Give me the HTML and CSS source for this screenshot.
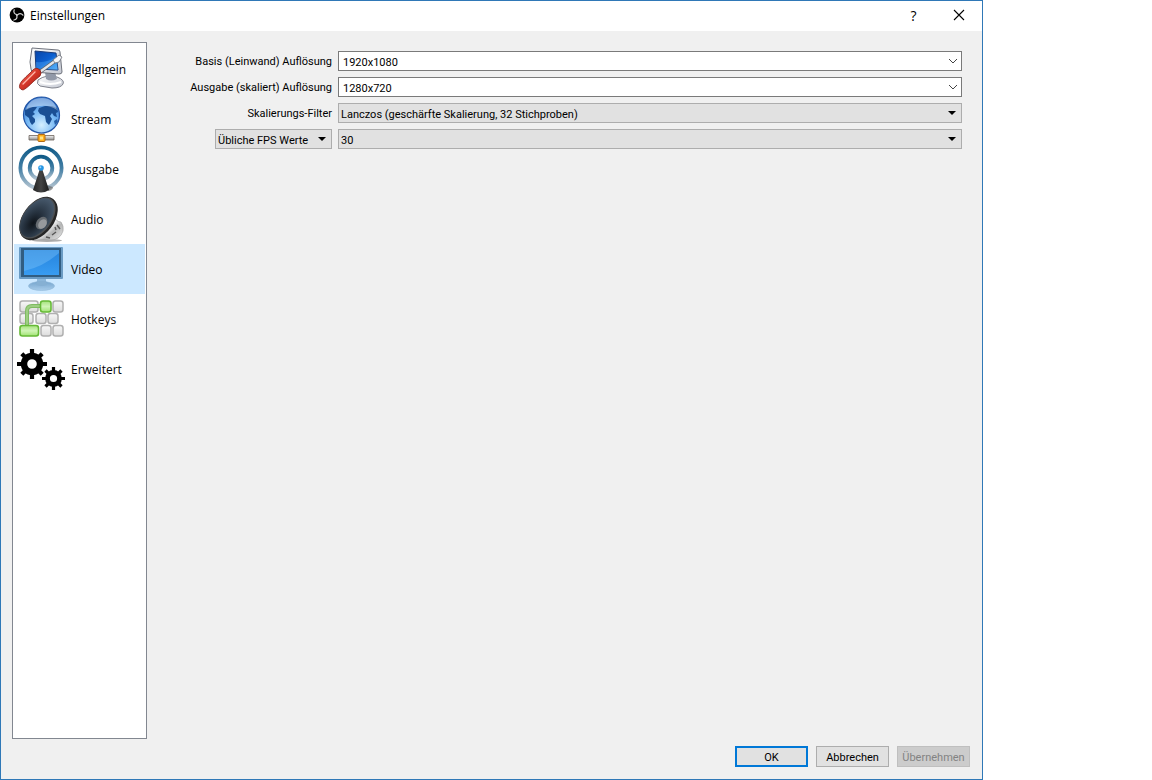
FILE: index.html
```
<!DOCTYPE html>
<html lang="de">
<head>
    <meta charset="UTF-8">
    <meta name="viewport" content="width=device-width, initial-scale=1.0">
    <title>Einstellungen</title>
    <link rel="stylesheet" href="styles.css">
</head>
<body>

    <div class="window">
        <header class="titlebar">
            <svg class="logo" viewBox="0 0 16 16" aria-hidden="true">
                <circle cx="8" cy="8" r="7.4" fill="#000"/>
                <g fill="none" stroke="#d8d8d8" stroke-width="1.2" stroke-linecap="round">
                    <path d="M5.2 2.8C4.2 5.2 5.5 7.3 8 7.6"/>
                    <path d="M5.2 2.8C4.2 5.2 5.5 7.3 8 7.6" transform="rotate(120 8 8)"/>
                    <path d="M5.2 2.8C4.2 5.2 5.5 7.3 8 7.6" transform="rotate(240 8 8)"/>
                </g>
            </svg>
            <h1>Einstellungen</h1>
            <button type="button" class="title-button" aria-label="Hilfe">?</button>
            <button type="button" class="title-button" aria-label="Schließen">
                <svg class="close-icon" viewBox="0 0 12 12"><path d="M1 1l10 10M11 1L1 11" stroke="#000" stroke-width="1.1"/></svg>
            </button>
        </header>

        <form class="settings">
            <div class="content">
                <nav class="sidebar">
                    <a href="#allgemein" class="nav-item">
                        <svg class="icon" viewBox="0 0 48 48">
                            <defs>
                                <linearGradient id="screen" x1="0" y1="0" x2="1" y2="1"><stop offset="0" stop-color="#0744a8"/><stop offset=".5" stop-color="#0b5fd0"/><stop offset="1" stop-color="#5ab4f8"/></linearGradient>
                                <linearGradient id="casing" x1="0" y1="0" x2="1" y2="1"><stop offset="0" stop-color="#fff"/><stop offset="1" stop-color="#c4c8d2"/></linearGradient>
                                <linearGradient id="handle" x1="0" y1="0" x2="1" y2="1"><stop offset="0" stop-color="#f58a7c"/><stop offset=".45" stop-color="#d93a2c"/><stop offset="1" stop-color="#9c160e"/></linearGradient>
                            </defs>
                            <path d="M21 35Q29 29 40 32Q48 35 46 39Q44 43 35 43L23 41Q19 39 21 35Z" fill="url(#casing)" stroke="#80838d"/>
                            <path d="M23 37Q33 41 44 37" fill="none" stroke="#fff" stroke-width="2"/>
                            <path d="M28 27h10l2 7q-6 3-11 0z" fill="#9299a8"/>
                            <path d="M15 3L41 5Q43 5 43 7L45 27Q45 29 42 29L17 27Q14 27 14 24L13 17Z" fill="url(#casing)" stroke="#6f737d"/>
                            <path d="M18 6L39 8L41 25L19 24Z" fill="url(#screen)" stroke="#183b7a"/>
                            <path d="M19 17Q30 18 40 12L41 25L19 24Z" fill="#58b4ff" opacity=".35"/>
                            <path d="M20 29L38 16" stroke="#5c6068" stroke-width="4"/>
                            <path d="M20 29L38 16" stroke="#e3e6ea" stroke-width="2.4"/>
                            <path d="M36 15L42 10L45 12L42 17L38 18Z" fill="#f5f6f8" stroke="#70747c" stroke-width=".8"/>
                            <path d="M3 39Q4 36 13 28L17 24Q20 22 23 25Q25 28 23 31L17 36Q9 44 6 45Q1 44 3 39Z" fill="url(#handle)" stroke="#8c1f17" stroke-width=".8"/>
                            <path d="M6 39Q11 34 18 27" fill="none" stroke="#ffb4a8" stroke-width="1.4" stroke-linecap="round"/>
                        </svg>
                        Allgemein
                    </a>
                    <a href="#stream" class="nav-item">
                        <svg class="icon" viewBox="0 0 48 48">
                            <defs>
                                <radialGradient id="globe" cx=".5" cy=".78" r=".8"><stop offset="0" stop-color="#d5efff"/><stop offset=".5" stop-color="#75b7f4"/><stop offset="1" stop-color="#2467c4"/></radialGradient>
                                <linearGradient id="pipe" x1="0" y1="0" x2="0" y2="1"><stop offset="0" stop-color="#f6f6f6"/><stop offset="1" stop-color="#8d8d8d"/></linearGradient>
                            </defs>
                            <path d="M22 36h5v6h-5z" fill="#aeb4bd" stroke="#6f747c" stroke-width=".6"/>
                            <path d="M12 40.5h25v4.5h-25z" fill="url(#pipe)" stroke="#6c625a" stroke-width=".8"/>
                            <rect x="21" y="39.5" width="7" height="7" rx="1" fill="#ffb01c" stroke="#b06a16"/>
                            <rect x="23" y="41.5" width="3" height="3" fill="#ffe48a"/>
                            <circle cx="24.5" cy="20" r="18" fill="url(#globe)" stroke="#2355a5" stroke-width="1.2"/>
                            <path d="M8 15Q11 12 16 12L20 12L18 15L16 17L18 19L15 21L18 24L18 27L15 30L13 27L12 23L8 20Z" fill="#1a4f94"/>
                            <path d="M22 13L28 11L35 11L40 13L41 17L39 18L40 22L37 21L35 18L33 21L35 24L32 30L29 27L28 21L23 19L21 16Z" fill="#1a4f94"/>
                            <path d="M37 26l3-2 1 3-3 3z" fill="#2860a8"/>
                            <path d="M9 15Q12 3 25 3Q37 3 40 15Q32 10 24 11Q15 11 9 15Z" fill="#fff" opacity=".4"/>
                        </svg>
                        Stream
                    </a>
                    <a href="#ausgabe" class="nav-item">
                        <svg class="icon" viewBox="0 0 48 48">
                            <defs>
                                <linearGradient id="wave" x1="0" y1="0" x2="0" y2="1"><stop offset="0" stop-color="#115b88"/><stop offset=".5" stop-color="#437fa5"/><stop offset="1" stop-color="#b6c5d1"/></linearGradient>
                                <linearGradient id="mast" x1="0" y1="0" x2="1" y2="0"><stop offset="0" stop-color="#222"/><stop offset=".5" stop-color="#444"/><stop offset="1" stop-color="#1c1c1c"/></linearGradient>
                            </defs>
                            <circle cx="24" cy="23" r="20.6" fill="none" stroke="url(#wave)" stroke-width="3.8"/>
                            <circle cx="24" cy="23" r="11.3" fill="none" stroke="url(#wave)" stroke-width="3.8"/>
                            <path d="M29 40L36 42Q36 45 31 46Z" fill="#555" opacity=".6"/>
                            <path d="M22.5 25h3L32 45Q24 50 16 45Z" fill="url(#mast)"/>
                            <circle cx="24" cy="23" r="2.8" fill="#2696e4"/>
                            <circle cx="23.3" cy="22.2" r="1" fill="#9ed8ff"/>
                        </svg>
                        Ausgabe
                    </a>
                    <a href="#audio" class="nav-item">
                        <svg class="icon" viewBox="0 0 48 48">
                            <defs>
                                <linearGradient id="metal" x1="0" y1="0" x2="1" y2="1"><stop offset="0" stop-color="#777"/><stop offset=".45" stop-color="#fff"/><stop offset=".65" stop-color="#b4b5b5"/><stop offset="1" stop-color="#eee"/></linearGradient>
                                <radialGradient id="cone" cx=".5" cy=".65" r=".7"><stop offset="0" stop-color="#0f141a"/><stop offset=".4" stop-color="#26323f"/><stop offset="1" stop-color="#4c5f73"/></radialGradient>
                            </defs>
                            <ellipse cx="30" cy="45.5" rx="15" ry="1.5" fill="#777" opacity=".6"/>
                            <path d="M36 20Q39 27 44 27Q47 31 46 36Q43 45 34 45L18 44Z" fill="url(#metal)" stroke="#999" stroke-width=".6"/>
                            <path d="M40 30l3 4M35 40l4-3M29 42l4 1M38 32l1 3" fill="none" stroke="#555" stroke-width="1.4"/>
                            <ellipse cx="21.5" cy="23.5" rx="15.5" ry="24.5" transform="rotate(37 21.5 23.5)" fill="#262626"/>
                            <ellipse cx="20.5" cy="23" rx="14" ry="23.5" transform="rotate(37 20.5 23)" fill="#4c4f51"/>
                            <ellipse cx="20" cy="22.8" rx="13" ry="22.3" transform="rotate(37 20 22.8)" fill="url(#cone)"/>
                            <ellipse cx="24.5" cy="28" rx="5" ry="7" transform="rotate(37 24.5 28)" fill="#666b70"/>
                            <ellipse cx="25.5" cy="29" rx="3.8" ry="5.2" transform="rotate(37 25.5 29)" fill="#96999c"/>
                        </svg>
                        Audio
                    </a>
                    <a href="#video" class="nav-item active">
                        <svg class="icon" viewBox="0 0 48 48">
                            <defs>
                                <linearGradient id="display" x1="0" y1="0" x2="0" y2="1"><stop offset="0" stop-color="#2583dc"/><stop offset="1" stop-color="#389cf2"/></linearGradient>
                                <linearGradient id="foot" x1="0" y1="0" x2="0" y2="1"><stop offset="0" stop-color="#76a5cd"/><stop offset="1" stop-color="#a8ccea"/></linearGradient>
                            </defs>
                            <path d="M20 33h9v6h-9z" fill="#8db7da"/>
                            <ellipse cx="24.5" cy="41" rx="13" ry="4.5" fill="url(#foot)" stroke="#8fb7d8" stroke-width=".6"/>
                            <path d="M20 36h9l1 4q-5 2-11 0z" fill="#86b0d3"/>
                            <rect x="2" y="2" width="44" height="32" rx="1" fill="#6a9bc4"/>
                            <rect x="4" y="3" width="40" height="29" fill="#315d82"/>
                            <rect x="7" y="5" width="35" height="25" fill="url(#display)"/>
                            <path d="M7 5h35v3Q26 22 7 26Z" fill="#80c5fa" opacity=".4"/>
                        </svg>
                        Video
                    </a>
                    <a href="#hotkeys" class="nav-item">
                        <svg class="icon" viewBox="0 0 48 48">
                            <defs>
                                <linearGradient id="key" x1="0" y1="0" x2="0" y2="1"><stop offset="0" stop-color="#f8f8f8"/><stop offset="1" stop-color="#dcdcdc"/></linearGradient>
                                <linearGradient id="green-key" x1="0" y1="0" x2="0" y2="1"><stop offset="0" stop-color="#a5e27c"/><stop offset=".5" stop-color="#d0f4b6"/><stop offset="1" stop-color="#a0e372"/></linearGradient>
                            </defs>
                            <g fill="url(#key)" stroke="#b0b0b0" stroke-width="1.5">
                                <rect x="3" y="6" width="18" height="11" rx="2.5"/>
                                <rect x="36" y="6" width="10" height="11" rx="2.5"/>
                                <rect x="3" y="18.5" width="13" height="10" rx="2.5"/>
                                <rect x="19" y="18.5" width="10" height="10" rx="2.5"/>
                                <rect x="31" y="18.5" width="10" height="10" rx="2.5"/>
                                <rect x="24" y="30.5" width="10" height="10.5" rx="2.5"/>
                                <rect x="36" y="30.5" width="10" height="10.5" rx="2.5"/>
                            </g>
                            <path d="M24 11H15Q10 11 10 16V31" fill="none" stroke="#7fbb62" stroke-width="4"/>
                            <path d="M24 11H15Q10 11 10 16V31" fill="none" stroke="#9dce82" stroke-width="2"/>
                            <g fill="url(#green-key)" stroke="#65b936" stroke-width="1.6">
                                <rect x="23.5" y="6" width="10.5" height="11" rx="2.5"/>
                                <rect x="3" y="30.5" width="18.5" height="10.5" rx="2.5"/>
                            </g>
                        </svg>
                        Hotkeys
                    </a>
                    <a href="#erweitert" class="nav-item">
                        <svg class="icon" viewBox="0 0 48 48">
                            <g fill="none" stroke="#000">
                                <circle cx="15" cy="19" r="8" stroke-width="6.4"/>
                                <path d="M15 4v6M15 28v6M0 19h6M24 19h6M4.8 8.8l4 4M21.2 25.2l4 4M4.8 29.2l4-4M21.2 12.8l4-4" stroke-width="4.2"/>
                                <circle cx="36.5" cy="33.5" r="6" stroke-width="4.8"/>
                                <path d="M36.5 22v4M36.5 41v4M25 33.5h4M44 33.5h4M28.5 25.5l3 3M41.5 38.5l3 3M28.5 41.5l3-3M41.5 28.5l3-3" stroke-width="3.2"/>
                            </g>
                        </svg>
                        Erweitert
                    </a>
                </nav>

                <main class="video-settings">
                    <label for="base">Basis (Leinwand) Auflösung</label>
                    <select id="base" name="base" class="editable">
                        <option>1920x1080</option>
                        <option>1280x720</option>
                    </select>

                    <label for="output">Ausgabe (skaliert) Auflösung</label>
                    <select id="output" name="output" class="editable">
                        <option>1280x720</option>
                        <option>1920x1080</option>
                    </select>

                    <label for="filter">Skalierungs-Filter</label>
                    <select id="filter" name="filter">
                        <option>Lanczos (geschärfte Skalierung, 32 Stichproben)</option>
                    </select>

                    <select id="fps-type" name="fps-type" class="fps-type" aria-label="FPS Typ">
                        <option>Übliche FPS Werte</option>
                    </select>
                    <select id="fps" name="fps" aria-label="FPS">
                        <option>30</option>
                        <option>60</option>
                    </select>
                </main>
            </div>

            <footer class="buttons">
                <button type="submit" class="button default">OK</button>
                <button type="button" class="button">Abbrechen</button>
                <button type="button" class="button" disabled>Übernehmen</button>
            </footer>
        </form>
    </div>

</body>
</html>
```
FILE: styles.css
```
* {
    box-sizing: border-box;
}
body {
    background-color: #ffffff;
    color: #000000;
    font-family: "Open Sans", "Noto Sans", sans-serif;
    font-size: 12px;
    margin: 0;
    padding-right: 169px;
}
.window {
    display: flex;
    flex-direction: column;
    min-height: 100vh;
    background-color: #f0f0f0;
    border: 1px solid #2f78b7;
}

/* Title bar */
.titlebar {
    display: flex;
    align-items: center;
    height: 30px;
    padding: 0 1px 2px 8px;
    background-color: #ffffff;
}
.logo {
    width: 16px;
    height: 16px;
    margin-right: 5px;
}
.titlebar h1 {
    flex: 1;
    margin: 0;
    font-size: 12px;
    font-weight: normal;
}
.title-button {
    display: flex;
    align-items: center;
    justify-content: center;
    width: 45px;
    height: 28px;
    padding: 0;
    border: none;
    background: none;
    color: #000000;
    font-family: inherit;
    font-size: 14px;
}
.close-icon {
    width: 12px;
    height: 12px;
}

.settings {
    flex: 1;
    display: flex;
    flex-direction: column;
    gap: 7px;
    padding: 11px 12px 12px 11px;
}
.content {
    flex: 1;
    display: flex;
}

/* Categories */
.sidebar {
    width: 135px;
    padding: 1px;
    background-color: #ffffff;
    border: 1px solid #828790;
}
.nav-item {
    display: flex;
    align-items: center;
    gap: 6px;
    height: 50px;
    padding-left: 3px;
    color: #000000;
    text-decoration: none;
}
.nav-item.active {
    background-color: #cce8ff;
}
.icon {
    width: 48px;
    height: 48px;
}

/* Video page */
.video-settings {
    flex: 1;
    display: grid;
    grid-template-columns: 185px 1fr;
    grid-auto-rows: 20px;
    align-content: start;
    gap: 6px;
    padding: 9px 8px 0 0;
    font-family: Roboto, sans-serif;
    font-size: 11px;
}
.video-settings label {
    text-align: right;
    line-height: 22px;
}
select {
    width: 100%;
    height: 20px;
    padding: 2px 20px 0 2px;
    appearance: none;
    color: #000000;
    background: #e1e1e1 url("data:image/svg+xml,%3Csvg xmlns='http://www.w3.org/2000/svg' width='8' height='4'%3E%3Cpath d='M0 0h8L4 4z'/%3E%3C/svg%3E") no-repeat right 5px center;
    border: 1px solid #adadad;
    border-radius: 0;
    font-family: inherit;
    font-size: inherit;
}
.editable {
    padding-left: 4px;
    background: #ffffff url("data:image/svg+xml,%3Csvg xmlns='http://www.w3.org/2000/svg' width='10' height='6'%3E%3Cpath d='M1 1l4 4 4-4' fill='none' stroke='%23444'/%3E%3C/svg%3E") no-repeat right 3px center;
    border-color: #7a7a7a;
}
.fps-type {
    justify-self: end;
    width: 117px;
}

/* Dialog buttons */
.buttons {
    display: flex;
    justify-content: flex-end;
    gap: 8px;
}
.button {
    width: 73px;
    height: 21px;
    padding: 1px 0 0;
    background-color: #e1e1e1;
    border: 1px solid #adadad;
    color: #000000;
    font-family: Roboto, sans-serif;
    font-size: 11px;
}
.button.default {
    border: 2px solid #0078d7;
}
.button:disabled {
    background-color: #cccccc;
    border-color: #bfbfbf;
    color: #838383;
}
```
